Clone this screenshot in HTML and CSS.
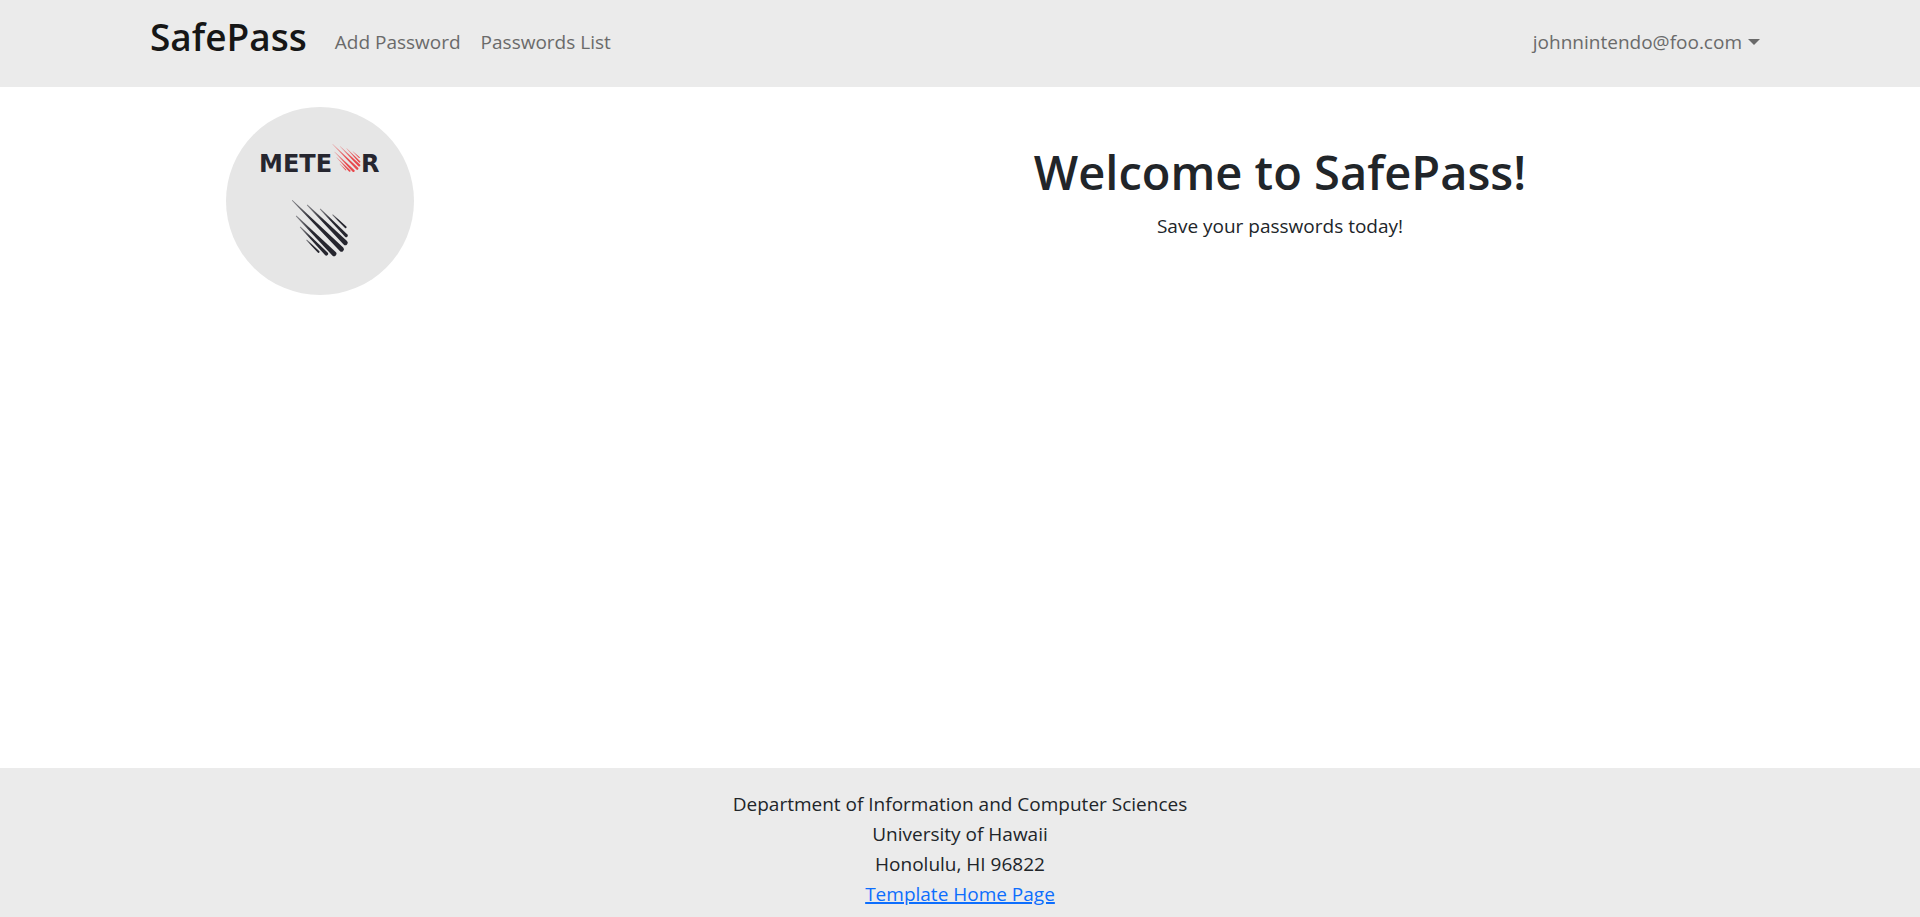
FILE: index.html
```html
<!DOCTYPE html>
<html lang="en">
<head>
<meta charset="utf-8">
<meta name="viewport" content="width=device-width, initial-scale=1">
<title>SafePass</title>
<link rel="stylesheet" href="styles.css">
</head>
<body>
<header class="navbar">
  <nav class="container">
    <a class="brand" href="#">SafePass</a>
    <a class="nav-link" href="#add">Add Password</a>
    <a class="nav-link" href="#list">Passwords List</a>
    <button class="user-menu" type="button" aria-haspopup="true">johnnintendo@foo.com<span class="caret"></span></button>
  </nav>
</header>
<main class="landing">
  <div class="logo-column">
    <svg class="logo" viewBox="0 0 188 188" role="img" aria-label="Meteor">
      <defs>
        <linearGradient id="dark" x1="0" y1="0" x2="1" y2="1">
          <stop offset="0" stop-color="#26262f" stop-opacity=".5"/>
          <stop offset=".4" stop-color="#26262f"/>
        </linearGradient>
        <linearGradient id="red" x1="0" y1="0" x2="1" y2="1">
          <stop offset="0" stop-color="#e85a5e" stop-opacity=".5"/>
          <stop offset=".6" stop-color="#e8484c"/>
        </linearGradient>
        <g id="streaks">
          <path d="M65.8 93.6L66.4 93L117.2 140.6A2.4 2.4 0 0 1 113.8 144Z"/>
          <path d="M80.8 98.2L81.4 97.6L121 134A2.4 2.4 0 0 1 117.6 137.4Z"/>
          <path d="M93.8 102.2L94.4 101.6L121.4 127.4A1.7 1.7 0 0 1 119 129.8Z"/>
          <path d="M106.2 107.9L106.8 107.3L120.4 119.6A1 1 0 0 1 119 121Z"/>
          <path d="M69.8 109.2L70.4 108.6L109.7 145A2.4 2.4 0 0 1 106.3 148.4Z"/>
          <path d="M73.8 120.2L74.4 119.6L101.6 145.4A1.8 1.8 0 0 1 99 148Z"/>
          <path d="M80.2 133.2L80.8 132.6L93.4 144.3A1 1 0 0 1 92 145.7Z"/>
        </g>
      </defs>
      <circle cx="94" cy="94" r="94" fill="#e6e6e6"/>
      <text class="logo-text" x="33" y="65">METE</text>
      <text class="logo-text" x="135" y="65">R</text>
      <use href="#streaks" fill="url(#red)" transform="translate(73.5 -9.5) scale(.5)"/>
      <use href="#streaks" fill="url(#dark)"/>
    </svg>
  </div>
  <div class="welcome">
    <h1>Welcome to SafePass!</h1>
    <p>Save your passwords today!</p>
  </div>
</main>
<footer class="footer">
  <div>Department of Information and Computer Sciences</div>
  <div>University of Hawaii</div>
  <div>Honolulu, HI 96822</div>
  <a href="#home">Template Home Page</a>
</footer>
</body>
</html>
```
FILE: styles.css
```css
* { box-sizing: border-box; }
body {
  margin: 0;
  min-height: 100vh;
  display: flex;
  flex-direction: column;
  font-family: "Segoe UI", "Open Sans", "Noto Sans", sans-serif;
  font-size: 19px;
  line-height: 30px;
  color: #212529;
  background: #fff;
}
.navbar { background: #ebebeb; padding: 7px 0 20px; }
.container {
  max-width: 1650px;
  margin: 0 auto;
  padding: 0 15px;
  display: flex;
  align-items: center;
}
.brand {
  font-size: 37px;
  line-height: 60px;
  font-weight: 600;
  color: #161616;
  text-decoration: none;
  margin-right: 18px;
}
.nav-link, .user-menu { color: #6a6a6a; padding: 10px 10px 0; }
.nav-link { text-decoration: none; }
.user-menu {
  margin-left: auto;
  border: 0;
  background: none;
  font: inherit;
  display: flex;
  align-items: center;
  gap: 6px;
}
.caret {
  border: 6px solid transparent;
  border-top-color: currentColor;
  border-bottom: 0;
}
.landing {
  flex: 1;
  display: grid;
  grid-template-columns: 1fr 2fr;
  align-items: start;
  padding: 20px 0;
}
.logo-column { display: flex; justify-content: center; }
.logo { width: 188px; height: 188px; }
.logo-text { font-family: "DejaVu Sans", sans-serif; font-weight: 700; font-size: 24px; fill: #26262f; }
.welcome { text-align: center; padding-top: 35px; }
h1 { margin: 0 0 9px; font-size: 47px; line-height: 60px; font-weight: 600; }
p { margin: 0; }
.footer { background: #ebebeb; text-align: center; padding: 21px 0 8px; }
.footer a { color: #0d6efd; text-decoration-thickness: 2px; }
```
